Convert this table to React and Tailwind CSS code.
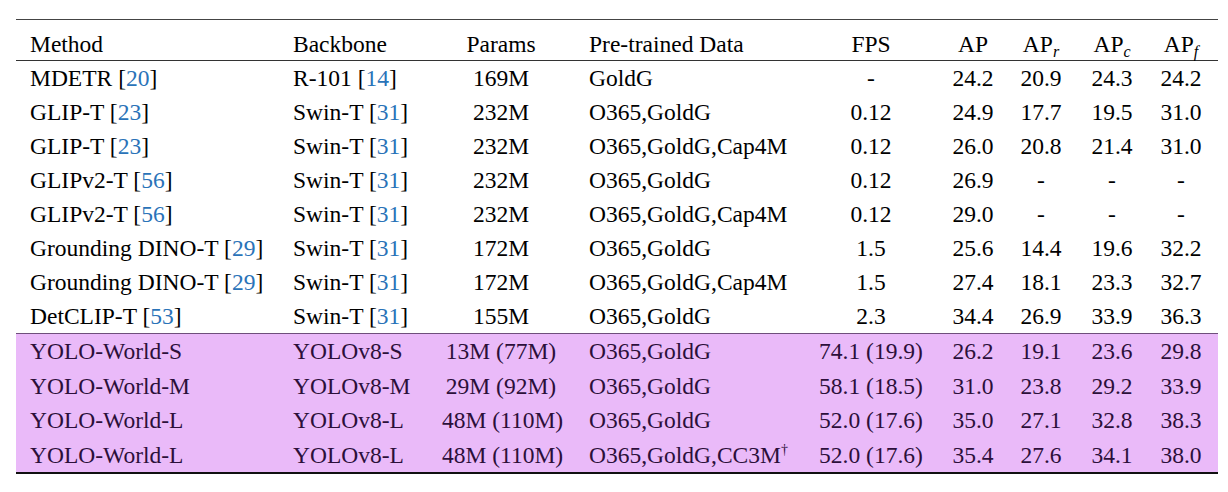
import React from 'react';

const Ref = ({ n }) => <span className="text-[#2a73b8]">{n}</span>;

const Cite = ({ name, n }) => (
  <>
    {name} [<Ref n={n} />]
  </>
);

const cols = 'grid grid-cols-[263px_163px_118px_250px_122px_82px_54px_88px_62px]';

const Sub = ({ c }) => (
  <sub className="align-baseline relative top-[5px] text-[16px] italic">{c}</sub>
);

const rows = [
  [<Cite name="MDETR" n="20" />, <Cite name="R-101" n="14" />, '169M', 'GoldG', '-', '24.2', '20.9', '24.3', '24.2'],
  [<Cite name="GLIP-T" n="23" />, <Cite name="Swin-T" n="31" />, '232M', 'O365,GoldG', '0.12', '24.9', '17.7', '19.5', '31.0'],
  [<Cite name="GLIP-T" n="23" />, <Cite name="Swin-T" n="31" />, '232M', 'O365,GoldG,Cap4M', '0.12', '26.0', '20.8', '21.4', '31.0'],
  [<Cite name="GLIPv2-T" n="56" />, <Cite name="Swin-T" n="31" />, '232M', 'O365,GoldG', '0.12', '26.9', '-', '-', '-'],
  [<Cite name="GLIPv2-T" n="56" />, <Cite name="Swin-T" n="31" />, '232M', 'O365,GoldG,Cap4M', '0.12', '29.0', '-', '-', '-'],
  [<Cite name="Grounding DINO-T" n="29" />, <Cite name="Swin-T" n="31" />, '172M', 'O365,GoldG', '1.5', '25.6', '14.4', '19.6', '32.2'],
  [<Cite name="Grounding DINO-T" n="29" />, <Cite name="Swin-T" n="31" />, '172M', 'O365,GoldG,Cap4M', '1.5', '27.4', '18.1', '23.3', '32.7'],
  [<Cite name="DetCLIP-T" n="53" />, <Cite name="Swin-T" n="31" />, '155M', 'O365,GoldG', '2.3', '34.4', '26.9', '33.9', '36.3'],
];

const ours = [
  ['YOLO-World-S', 'YOLOv8-S', '13M (77M)', 'O365,GoldG', '74.1 (19.9)', '26.2', '19.1', '23.6', '29.8'],
  ['YOLO-World-M', 'YOLOv8-M', '29M (92M)', 'O365,GoldG', '58.1 (18.5)', '31.0', '23.8', '29.2', '33.9'],
  ['YOLO-World-L', 'YOLOv8-L', '48M (110M)', 'O365,GoldG', '52.0 (17.6)', '35.0', '27.1', '32.8', '38.3'],
  [
    'YOLO-World-L',
    'YOLOv8-L',
    '48M (110M)',
    <>
      O365,GoldG,CC3M<sup className="relative -top-[9px] text-[14px] align-baseline">†</sup>
    </>,
    '52.0 (17.6)',
    '35.4',
    '27.6',
    '34.1',
    '38.0',
  ],
];

const Cells = ({ r }) => (
  <>
    <div className="pl-[14px] whitespace-nowrap">{r[0]}</div>
    <div className="pl-[14px] whitespace-nowrap">{r[1]}</div>
    <div className="text-center whitespace-nowrap">{r[2]}</div>
    <div className="pl-[29px] whitespace-nowrap">{r[3]}</div>
    <div className="text-center whitespace-nowrap">{r[4]}</div>
    <div className="text-center">{r[5]}</div>
    <div className="text-center">{r[6]}</div>
    <div className="text-center">{r[7]}</div>
    <div className="text-center pr-[12px]">{r[8]}</div>
  </>
);

export default function App() {
  return (
    <div className="w-[1228px] h-[492px] bg-white pt-[19px] pl-[16px] font-['Liberation_Serif',serif] text-[23.5px] text-black">
      <div className="w-[1202px]">
        <div className={`${cols} h-[42px] items-center pt-[7px] border-t border-b border-t-[#444] border-b-[#333] leading-[32px]`}>
          <Cells
            r={[
              'Method',
              'Backbone',
              'Params',
              'Pre-trained Data',
              'FPS',
              'AP',
              <>AP<Sub c="r" /></>,
              <>AP<Sub c="c" /></>,
              <>AP<Sub c="f" /></>,
            ]}
          />
        </div>
        {rows.map((r, i) => (
          <div key={i} className={`${cols} h-[34px] items-center leading-[34px]`}>
            <Cells r={r} />
          </div>
        ))}
        <div className="bg-[#eabaf9] border-t border-[#6f4f7c] border-b-2 border-b-[#111] text-[#2c0f3a]">
          {ours.map((r, i) => (
            <div key={i} className={`${cols} h-[34.5px] items-center leading-[34px]`}>
              <Cells r={r} />
            </div>
          ))}
        </div>
      </div>
    </div>
  );
}
